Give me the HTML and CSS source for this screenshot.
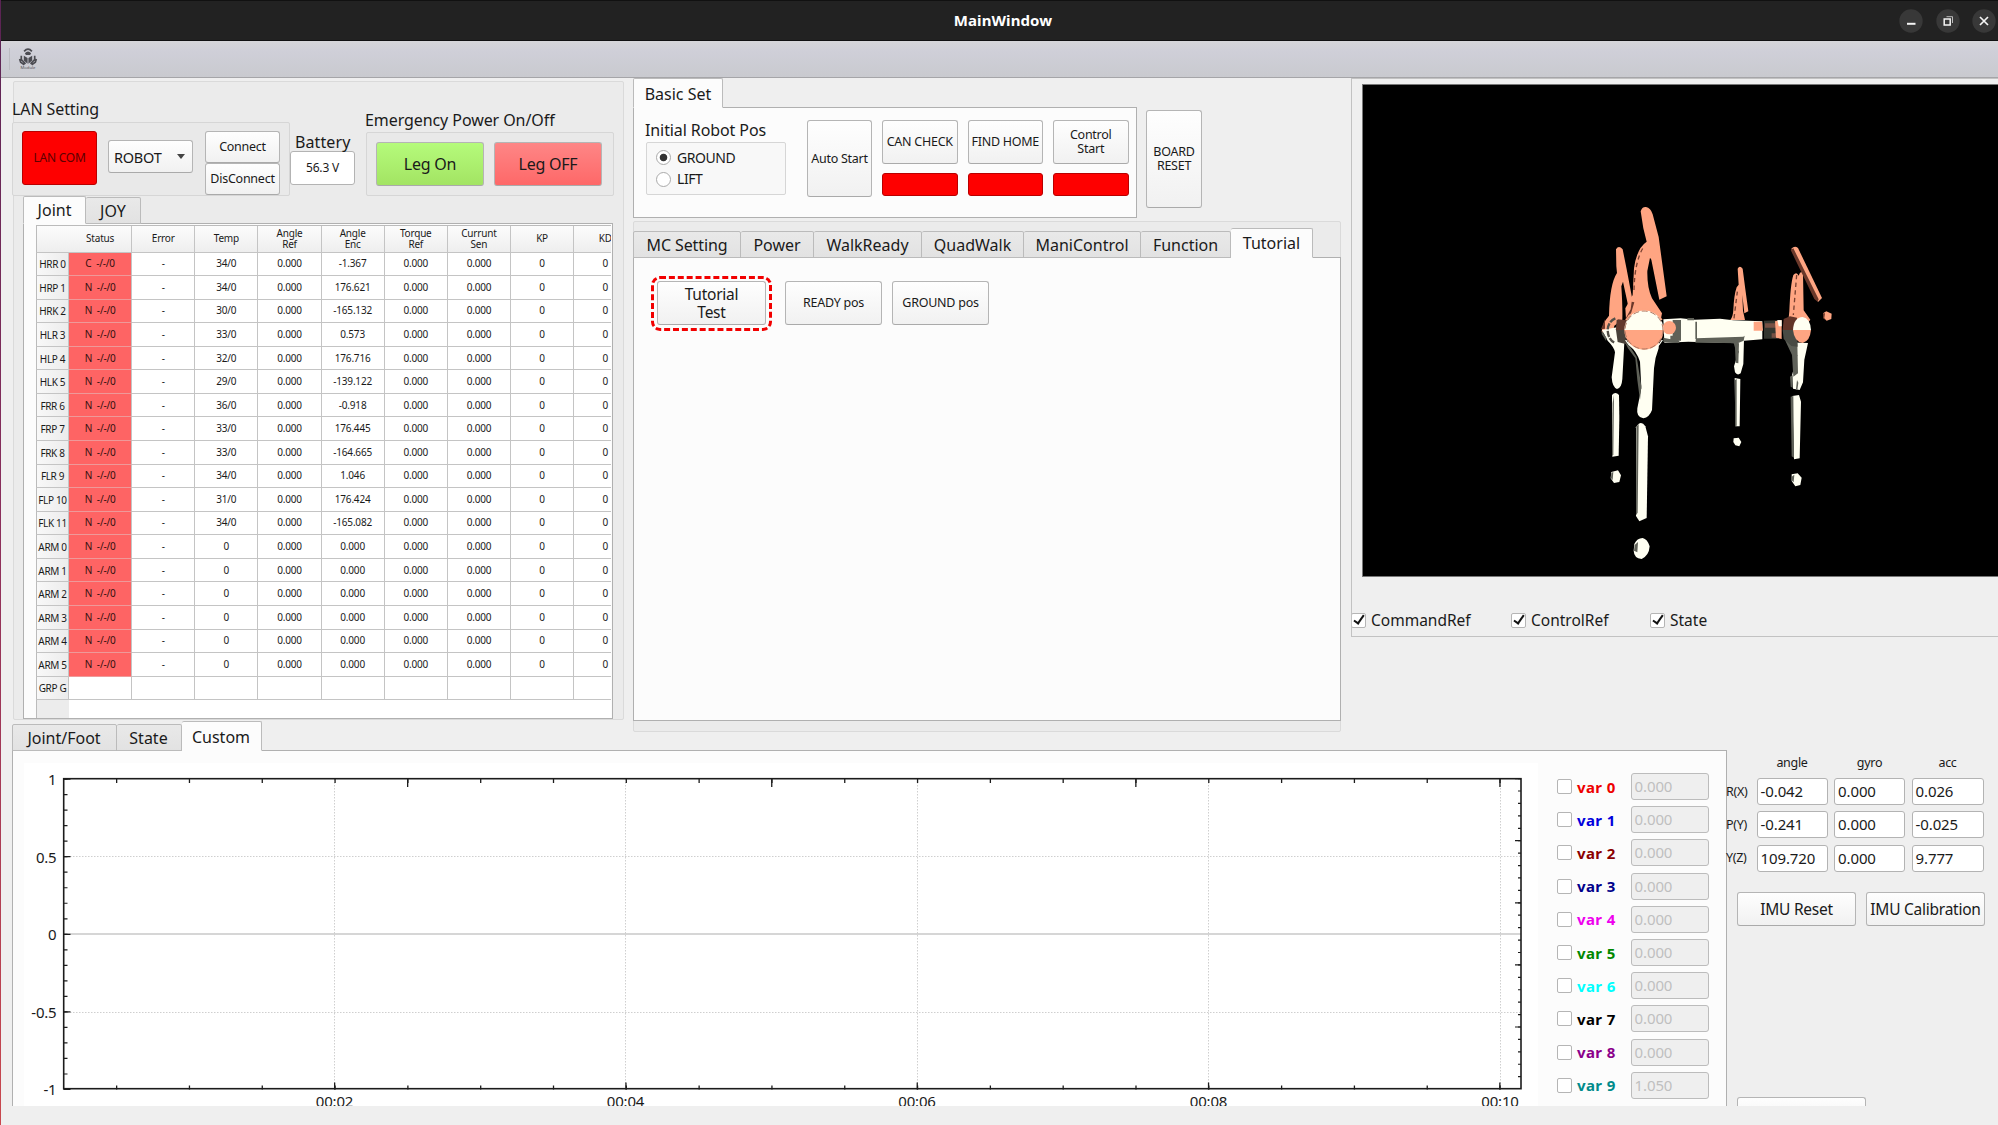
FILE: index.html
```html
<!DOCTYPE html>
<html lang="en">
<head>
<meta charset="utf-8">
<title>MainWindow</title>
<link rel="stylesheet" href="styles.css">
</head>
<body>
<header class="titlebar">
  <h1>MainWindow</h1>
  <div class="winbtns">
    <svg viewBox="0 0 24 24"><circle cx="12" cy="12" r="11.7"/><path d="M8 14.8h8.500" stroke-width="2"/></svg>
    <svg viewBox="0 0 24 24"><circle cx="12" cy="12" r="11.700"/><path d="M8.200 10h6v6h-6z" stroke-width="1.500"/><path d="M10.500 7.700h6v6.300" stroke-width="1" opacity=".7"/></svg>
    <svg viewBox="0 0 24 24"><circle cx="12" cy="12" r="11.700"/><path d="M8 8l8 8M16 8l-8 8" stroke-width="1.700"/></svg>
  </div>
</header>
<div class="toolbar">
  <svg class="logo" viewBox="0 0 18 21"><g fill="none" stroke="#4c4c52" stroke-width="1.600"><path d="M5.300 3.200Q9-1 12.700 3.200"/><path d="M2.600 7.500v3.500l4 4.200M15.400 7.500v3.500l-4 4.200M1 10.500l1 3 3.500 2.500M17 10.500l-1 3-3.500 2.500"/></g><path fill="#4c4c52" d="M6 5q3-3.500 6 0l-1 1.800H7zM5 7.500l3.600 2v5.500L5 12zM13 7.500l-3.600 2v5.500L13 12z"/><text x="9" y="19.800">Module</text></svg>
</div>

<main class="top">
  <section class="left frame">
    <div class="controls">
      <div class="lan">
        <label class="cap">LAN Setting</label>
        <div class="box lanbox">
          <button class="btn red lancom">LAN COM</button>
          <div class="btn combo">ROBOT<i></i></div>
          <div class="conn"><button class="btn">Connect</button><button class="btn">DisConnect</button></div>
        </div>
      </div>
      <div class="battery"><label class="cap">Battery</label><div class="field">56.3 V</div></div>
      <div class="power">
        <label class="cap">Emergency Power On/Off</label>
        <div class="box legs"><button class="btn green">Leg On</button><button class="btn pink">Leg OFF</button></div>
      </div>
    </div>
    <nav class="tabs jtabs"><span class="tab on">Joint</span><span class="tab">JOY</span></nav>
    <div class="pane jpane"><div class="table" id="joints"></div></div>
  </section>

  <section class="mid">
    <div class="basic">
      <div class="basicleft">
        <nav class="tabs btabs"><span class="tab on">Basic Set</span></nav>
        <div class="pane bpane">
          <div class="pos">
            <label class="cap">Initial Robot Pos</label>
            <div class="box radios"><span><i class="radio sel"></i>GROUND</span><span><i class="radio"></i>LIFT</span></div>
          </div>
          <button class="btn auto">Auto Start</button>
          <div class="step"><button class="btn">CAN CHECK</button><i class="btn red"></i></div>
          <div class="step"><button class="btn">FIND HOME</button><i class="btn red"></i></div>
          <div class="step"><button class="btn">Control<br>Start</button><i class="btn red"></i></div>
        </div>
      </div>
      <button class="btn board">BOARD<br>RESET</button>
    </div>
    <div class="frame modes">
      <nav class="tabs mtabs"><span class="tab">MC Setting</span><span class="tab">Power</span><span class="tab">WalkReady</span><span class="tab">QuadWalk</span><span class="tab">ManiControl</span><span class="tab">Function</span><span class="tab on">Tutorial</span></nav>
      <div class="pane mpane">
        <div class="mark"><button class="btn">Tutorial<br>Test</button></div>
        <button class="btn posbtn">READY pos</button>
        <button class="btn posbtn">GROUND pos</button>
      </div>
    </div>
  </section>

  <section class="view">
    <div class="scene">
      <svg class="robot" viewBox="0 0 810 1140">
        <g fill="#ffa582">
          <path d="M108 178q8-14 20 0l12 60 18 95-14 12-15-70-5 14q4 60 3 100l-24 18-6 26-32-6q0-25 22-50 2-95 24-128l-2-20z"/>
          <path d="M182 64q4-14 16-13 14 2 20 22l18 68 24 178-22 10-24-120-4-6-8 40q-1 50 14 82l30 45-10 50H140l-4-65 22-40 4-80q8-60 38-80l-10-40z"/>
          <path d="M473 236q6-12 15 0l8 62 9 66-12 6-6-55 2 47 6 28h-44q8-10 9-30 2-45 10-68l6-8z"/>
          <path d="M640 255q10-12 16 2 6-18 13-6l2 110 20 28-20 25h-48l5-50q3-80 12-109z"/>
          <path d="M634 176q10-10 20-2l72 150-12 12z"/>
          <path d="M729 370l10-6 16 7-1 16-14 5-11-9z"/>
        </g>
        <path d="M632 180l8-5 76 153-3 7-10-8zM729 370l6 0-2 14 7 8-11-9zM63 418l12-30 0 28zM155 335l8 2-12 40-15 24-6-3 22-40z" fill="#6b382a"/>
        <path d="M162 300q2-85 28-128M650 255l-10 120M462 385l10-80" stroke="#7b4131" stroke-width="4" fill="none" stroke-dasharray="13 10"/>
        <g fill="#fffff2">
          <path d="M66 420l17 32q20 20 22 35l-10 75q2 30 16 35 14-2 16-30l6-110 8-37-22-10z"/>
          <path d="M140 440h98l-2 35q-12 30-14 60l-6 125q-8 22-26 25-22-3-18-30l12-60-4-80q-10-30-34-52z"/>
          <path d="M96 615q10-12 21 0l1 70-2 112-19 3z"/>
          <path d="M168 712q14-25 28-3l8 30-4 245-22 10-10-16z"/>
          <path d="M460 450l32-3-2 75-8 28q-10 8-17-3l-3-18 14-44zM464 564l17 3-2 142h-13z"/>
          <path d="M622 457l62 2-11 50-4 68-10 23-20-4-3-40 16-60zM637 618l20-3 6 20-4 170-17 3z"/>
          <path d="M94 846l20-5 9 15-5 20-16 3-10-14zM163 1062q8-18 25-18 14 3 21 25-2 28-24 38-23-2-24-25zM461 745l15-2 8 13-6 13-12-3-6-10zM635 853l18-3 12 13-4 22-15 4-11-16z"/>
          <path d="M250 388l52-3 43 4 75-3 40 5 87 3v54l-55 4-17 8-150-5-72 3z"/>
        </g>
        <g fill="#5f6158">
          <path d="M278 390h25v62h-32v-15h7zM348 445l142-5 4-3-3 15-18 8-85-2h-42zM250 443l48 10v6l-48-3zM322 384h20v7h-20zM346 395h5v52h-5z"/>
          <path d="M66 422l14 23-2 7-13-20zM134 455l17 17 19 29 14 87-4 42-8-60-6-65-22-30zM460 455l17 5-2 60-8-2-2-45zM615 450l37 10 2 90-14 10-4-65zM632 620l8-2 2 185-7-4zM169 710l7-8-3 266-5 8zM98 640l4-25-2 180-4 2zM465 570l5-3v140l-5 2zM630 560l8-5v38l-6-3zM651 570l4 8-3 22-4-4zM94 850l6-5-2 25-5-5zM164 1065l10-9-2 31-10-5zM635 860l8-6-2 23-6-6z"/>
        </g>
        <path d="M110 390l35 2-10 50 10 22-32-8-5-35z" fill="#484139"/>
        <path d="M113 388l27 3-6 29h-27z" fill="#63382d"/>
        <path d="M552 392l43-1v55h-43z" fill="#343630"/>
        <path d="M555 400h40v13h-40zM575 430h22v13h-22z" fill="#765044"/>
        <path d="M585 394l20-4v57l-17-4z" fill="#ffa582"/><path d="M592 390l13 1v18h-9z" fill="#fffff2"/>
        <path d="M611 387l19-8 21 4v37h-43z" fill="#623428"/><path d="M608 420h43l2 50-19-2-23-21z" fill="#494b44"/>
        <path d="M106 385q-22 10-23 35 1 28 20 38" fill="none" stroke="#54514a" stroke-width="7" stroke-dasharray="19 4"/>
        <path d="M521 395h25l3 27h-28z" fill="#ffa582"/>
        <circle cx="268" cy="413" r="20" fill="#ffa582"/>
        <path d="M133 420a59 59 0 0 1 118 0z" fill="#fffff2"/><path d="M133 420a59 59 0 0 0 118 0z" fill="#ffa582"/>
        <circle cx="192" cy="420" r="57" fill="none" stroke="#ad755e" stroke-width="3" stroke-dasharray="18 8"/>
        <path d="M138 390a62 62 0 0 1 108 0" fill="none" stroke="#ffa582" stroke-width="4"/>
        <path d="M137 450a62 62 0 0 0 110 0" fill="none" stroke="#fffff2" stroke-width="4"/>
        <path d="M639 420q2-38 29-39 23 4 25 39z" fill="#fffff2"/><path d="M639 420q4 36 29 39 22-6 25-39z" fill="#ffa582"/>
      </svg>
    </div>
    <div class="checks"><span><i class="chk on"></i>CommandRef</span><span><i class="chk on"></i>ControlRef</span><span><i class="chk on"></i>State</span></div>
  </section>
</main>

<section class="bottom">
  <div class="plotside">
    <nav class="tabs ptabs"><span class="tab">Joint/Foot</span><span class="tab">State</span><span class="tab on">Custom</span></nav>
    <div class="pane ppane">
      <svg class="plot" viewBox="14 763 1524 343">
        <rect x="24" y="763" width="1514" height="343" fill="#fff"/>
        <g fill="none" stroke="#cfcfcf" stroke-dasharray="1.500 1.500"><path d="M334.500 779V1089M625.500 779V1089M917.500 779V1089M1208.500 779V1089M1500.500 779V1089M64 856.500H1521M64 1012.500H1521"/></g>
        <path d="M64 934H1521" stroke="#c8c8c8" stroke-width="1.500"/>
        <g stroke="#1c1c1c" fill="none">
          <path d="M116 781H1521M116 1087.500H1521" stroke-width="4" stroke-dasharray="1.300 71.510"/>
          <path d="M407 783H1521" stroke-width="8" stroke-dasharray="1.300 362.800"/>
          <path d="M334 1086H1521" stroke-width="7" stroke-dasharray="1.300 290"/>
          <path d="M65.500 778.500V1089" stroke-width="4" stroke-dasharray="1.200 14.320"/>
          <path d="M67 778.500V1090" stroke-width="7" stroke-dasharray="1.200 76.400"/>
          <path d="M1519.500 778V1089" stroke-width="3" stroke-dasharray="1.200 11.220"/>
          <path d="M1518 778V1089" stroke-width="6" stroke-dasharray="1.200 60.900"/>
          <rect x="63.700" y="778.700" width="1457.300" height="310" stroke-width="1.600"/>
        </g>
        <g class="ylab"><text x="56.500" y="784.500">1</text><text x="56.500" y="862.500">0.5</text><text x="56.500" y="939.500">0</text><text x="56.500" y="1017.500">-0.5</text><text x="56.500" y="1094.500">-1</text></g>
        <g class="xlab"><text x="334.500" y="1106.500">00:02</text><text x="625.500" y="1106.500">00:04</text><text x="917" y="1106.500">00:06</text><text x="1208.500" y="1106.500">00:08</text><text x="1500" y="1106.500">00:10</text></g>
      </svg>
      <div class="vars" id="vars"></div>
    </div>
  </div>
  <div class="imu">
    <div class="grid">
      <span></span><b>angle</b><b>gyro</b><b>acc</b>
      <span>R(X)</span><div class="field">-0.042</div><div class="field">0.000</div><div class="field">0.026</div>
      <span>P(Y)</span><div class="field">-0.241</div><div class="field">0.000</div><div class="field">-0.025</div>
      <span>Y(Z)</span><div class="field">109.720</div><div class="field">0.000</div><div class="field">9.777</div>
    </div>
    <div class="imubtns"><button class="btn">IMU Reset</button><button class="btn">IMU Calibration</button></div>
    <div class="btn partial"></div>
  </div>
</section>
<script src="app.js"></script>
</body>
</html>
```
FILE: styles.css
```css
* { box-sizing: border-box; }
body { margin: 0; width: 1998px; height: 1125px; overflow: hidden; background: #efefef; color: #1a1a1a; font: 16px/20px "Noto Sans", "Open Sans", sans-serif; border-left: 1px solid; border-image: linear-gradient(#5a2454, #8a2f5c 45%, #c9484e) 1; display: flex; flex-direction: column; }
button { font: inherit; color: inherit; padding: 0; }
i { font-style: normal; }
.titlebar { height: 41px; flex: none; margin-left: -1px; background: #222; border-top: 1px solid #111; border-bottom: 1px solid #111; display: grid; grid-template-columns: 1fr auto 1fr; align-items: center; }
.titlebar h1 { grid-column: 2; margin: -1px 0 0 8px; font-size: 15px; font-weight: 700; color: #fff; letter-spacing: .1px; }
.winbtns { display: flex; gap: 12.500px; justify-self: end; margin-right: 2px; }
.winbtns svg { width: 24px; height: 24px; fill: none; stroke: #f4f4f4; }
.winbtns circle { fill: #383838; stroke: none; }
.toolbar { height: 37px; flex: none; background: linear-gradient(#d6d6d9, #cfcfd8 30%, #c9cacf); border-bottom: 1.500px solid #a5a5a8; padding: 7px 0 0 8px; }
.logo { display: block; width: 37px; height: 22px; border-left: 1px solid #bcbcc2; }
.logo text { font-size: 4px; text-anchor: middle; fill: #555; }
.top { height: 643px; flex: none; display: flex; align-items: flex-start; padding-left: 12px; }
.frame { border: 1px solid #dadada; border-radius: 2px; background: #ebebeb; }
.box { border: 1px solid #d6d6d6; border-radius: 2px; background: #e9e9e9; }
.cap { display: block; font-size: 16px; white-space: nowrap; }
.btn { display: flex; align-items: center; justify-content: center; text-align: center; border: 1px solid #b5b5b5; border-bottom-color: #aaa; border-radius: 3px; background: linear-gradient(#fefefe, #f1f1f1); font-size: 12.500px; line-height: 14px; letter-spacing: -.25px; white-space: nowrap; }
.red { background: #fe0000; border-color: #b90000; }
.field { background: #fff; border: 1px solid #b3b3b3; border-radius: 3px; }
.pane { border: 1px solid #b0b0b0; background: #fcfcfc; }
.tabs { display: flex; align-items: flex-end; position: relative; margin-bottom: -1px; z-index: 1; }
.tab { display: flex; align-items: center; justify-content: center; height: 27px; border: 1px solid #bbb; border-left: 0; background: linear-gradient(#e9e9e9, #e2e2e2); border-radius: 2px 2px 0 0; white-space: nowrap; }
.tab:first-child { border-left: 1px solid #bbb; }
.tab.on { height: 30px; background: #fcfcfc; border-bottom-color: #fcfcfc; }

/* left column */
.left { width: 611px; height: 639px; margin-top: 3px; flex: none; }
.controls { display: flex; height: 114px; align-items: flex-end; margin-left: -2px; }
.lan { width: 278px; }
.lan .cap { margin-bottom: 3px; letter-spacing: -.1px; }
.lanbox { height: 74px; display: flex; padding: 8px 0 0 9px; }
.lancom { width: 75px; height: 54px; font-size: 12px; color: #5c0000; }
.combo { width: 85px; height: 33px; margin: 9px 12px 0 11px; font-size: 14.500px; justify-content: space-between; padding: 0 7px 0 5px; }
.combo i { border: 4.500px solid transparent; border-top: 5px solid #444; border-bottom: 0; }
.conn .btn { width: 75px; height: 32px; }
.battery { width: 65px; padding-bottom: 11px; }
.battery .cap { margin: 0 0 -1px 5px; letter-spacing: .1px; }
.battery .field { height: 34px; font-size: 12px; letter-spacing: -.2px; display: grid; place-items: center; }
.power { margin-left: 10px; width: 249px; }
.power .cap { margin-bottom: 2px; letter-spacing: -.08px; }
.legs { margin-left: 1px; height: 64px; padding: 9px 9px; display: flex; gap: 10px; }
.legs .btn { width: 108px; height: 44px; font-size: 16px; }
.green { background: linear-gradient(#b5fb7b, #a3e463); }
.pink { background: linear-gradient(#fe8686, #fe6868); }
.jtabs { margin-left: 9px; }
.jtabs .tab { width: 55px; }
.jtabs .tab.on { width: 63px; height: 28px; }
.jpane { margin-left: 9px; width: 590px; height: 496px; padding: 1px 0 0 12px; overflow: hidden; }
.table { width: 575px; height: 100%; overflow: hidden; display: flex; flex-direction: column; background: #fff; font-size: 10px; letter-spacing: -.2px; }
.tr { display: grid; grid-template-columns: 33px repeat(9, 63.150px); grid-template-rows: 100%; height: 23.570px; flex: none; }
.tr > * { border-right: 1px solid #c4c4c4; border-bottom: 1px solid #c4c4c4; display: flex; align-items: center; justify-content: center; line-height: 11px; text-align: center; white-space: nowrap; }
.tr .rh { background: linear-gradient(90deg, #f8f8f8, #ececec); border-left: 1px solid #bbb; letter-spacing: -.35px; padding-top: 2px; }
.tr .st { background: #fe6464; border-bottom-color: #e99; color: #33100f; white-space: pre; }
.tr.head { height: 27.500px; border-top: 1px solid #bbb; }
.tr.head > * { background: linear-gradient(#fcfcfc, #eee); }
.tr.head .rh { border-right: 0; }
.tr.rest { flex: 1; } .tr.rest > * { border: 0; } .tr.rest .rh { background: #ececec; border-left: 1px solid #bbb; }

/* middle column */
.mid { width: 708px; margin-left: 9px; flex: none; }
.basic { display: flex; height: 143px; }
.basicleft { width: 504px; }
.btabs .tab { width: 90px; padding-top: 2px; }
.bpane { height: 111px; display: flex; padding: 12px 0 0 12px; }
.pos { width: 161px; margin-top: -1px; }
.pos .cap { margin: 1px 0 2px -1px; letter-spacing: -.1px; }
.radios { width: 140px; height: 53px; background: #f8f8f8; padding: 4px 9px; font-size: 14px; letter-spacing: -.45px; }
.radios span { display: flex; align-items: center; height: 21.500px; }
.radio { width: 15px; height: 15px; border: 1px solid #aaa; border-radius: 50%; background: #fff; margin-right: 6px; }
.sel { background: radial-gradient(circle, #333 3.400px, #fff 4.200px); }
.auto { width: 65px; height: 77px; }
.step { margin-left: 10px; width: 75.500px; display: flex; flex-direction: column; gap: 9px; }
.step button { height: 44px; }
.step i { height: 23px; }
.board { width: 56px; height: 98px; margin: 32px 0 0 9px; }
.modes { width: 708px; height: 511px; }
.mtabs { margin: 5px 0 -1px -1px; height: 31px; }
.mtabs .tab:nth-child(1) { width: 108px; letter-spacing: -.1px; } .mtabs .tab:nth-child(2) { width: 73px; } .mtabs .tab:nth-child(3) { width: 108px; } .mtabs .tab:nth-child(4) { width: 102px; } .mtabs .tab:nth-child(5) { width: 117px; } .mtabs .tab:nth-child(6) { width: 90px; } .mtabs .tab:nth-child(7) { width: 82px; }
.mpane { margin: 0 -1px; height: 464px; padding: 18px 0 0 17px; display: flex; align-items: flex-start; }
.mark { border: 3px dashed #f20000; border-radius: 9px; width: 121px; height: 55px; padding: 2px 3px; margin-right: 13px; }
.mark .btn { width: 109px; height: 44px; font-size: 15.500px; line-height: 18px; }
.posbtn { width: 97px; height: 44px; margin: 5px 10px 0 0; }

/* 3D view */
.view { flex: 1; margin-left: 10px; height: 559px; border: 1px solid #c2c2c2; border-right: 0; overflow: hidden; }
.scene { margin: 5px 0 0 10px; height: 493px; background: #000; border: 1px solid #777; border-right: 0; padding: 105px 0 0 217px; }
.robot { width: 270px; height: 380px; display: block; }
.checks { display: grid; grid-template-columns: 160px 139px auto; margin: 33px 0 0 -1px; font-size: 15.500px; }
.checks span { display: flex; align-items: center; }
.chk { width: 15px; height: 15px; flex: none; border: 1px solid #b5b5b5; border-radius: 2px; background: #fff; margin-right: 5px; display: grid; place-items: center; }
.chk.on::after { content: ""; width: 4px; height: 9px; margin: -3px 0 0 1px; border: solid #111; border-width: 0 2px 2px 0; transform: rotate(35deg); }

/* plot and variables */
.bottom { height: 385px; flex: none; display: flex; overflow: hidden; padding-left: 11px; }
.plotside { width: 1715px; flex: none; }
.ptabs .tab { width: 65px; padding-right: 1px; } .ptabs .tab:first-child { width: 105px; } .ptabs .tab.on { width: 80px; padding-top: 1px; }
.ppane { height: 370px; display: flex; padding: 12px 0 0 1px; }
.plot { width: 1524px; height: 343px; flex: none; }
.plot text { font-size: 15px; fill: #1a1a1a; letter-spacing: -.2px; }
.ylab { text-anchor: end; } .xlab { text-anchor: middle; }
.vars { margin: -4px 0 0 18.500px; padding-top: 11px; }
.var { display: flex; align-items: center; height: 33.200px; font-size: 15px; }
.var .chk { margin-right: 5.500px; }
.var b { width: 53.500px; letter-spacing: .4px; }
.var .field { width: 78px; height: 27px; background: #efefef; color: #bfbfbf; padding: 2px 3px; letter-spacing: -.1px; border-color: #bcbcbc; }
.imu { width: 272px; flex: none; }
.grid { display: grid; grid-template-columns: 24px 71px 71px 72px; grid-template-rows: 24px 27px 27px 27px; gap: 6.200px 6.500px; width: 258px; margin: 29px 0 0 -1px; font-size: 15px; align-items: center; }
.grid span, .grid b { font-size: 12.500px; font-weight: 400; letter-spacing: -.3px; }
.grid b { text-align: center; margin-top: 1px; }
.grid .field { height: 27px; padding: 2px 3px; letter-spacing: -.1px; margin-top: -4px; }
.grid span { margin-top: -4px; }
.imubtns { display: flex; gap: 10px; margin: 18px 0 0 10px; }
.imubtns .btn { width: 119px; height: 34px; font-size: 15.500px; }
.partial { width: 129px; height: 30px; margin: 171px 0 0 10px; }
```
FILE: app.js
```js
// joint rows: name, status letter, temperature, encoder angle
const joints = [
  ["HRR 0", "C", "34/0", "-1.367"], ["HRP 1", "N", "34/0", "176.621"], ["HRK 2", "N", "30/0", "-165.132"],
  ["HLR 3", "N", "33/0", "0.573"], ["HLP 4", "N", "32/0", "176.716"], ["HLK 5", "N", "29/0", "-139.122"],
  ["FRR 6", "N", "36/0", "-0.918"], ["FRP 7", "N", "33/0", "176.445"], ["FRK 8", "N", "33/0", "-164.665"],
  ["FLR 9", "N", "34/0", "1.046"], ["FLP 10", "N", "31/0", "176.424"], ["FLK 11", "N", "34/0", "-165.082"],
  ["ARM 0", "N", "0", "0.000"], ["ARM 1", "N", "0", "0.000"], ["ARM 2", "N", "0", "0.000"],
  ["ARM 3", "N", "0", "0.000"], ["ARM 4", "N", "0", "0.000"], ["ARM 5", "N", "0", "0.000"]
];
const row = (cls, cells) => `<div class="tr ${cls}">${cells.map((c, i) => `<div class="${i === 0 ? "rh" : i === 1 && cls === "data" ? "st" : ""}">${c}</div>`).join("")}</div>`;
let html = row("head", ["", "Status", "Error", "Temp", "Angle<br>Ref", "Angle<br>Enc", "Torque<br>Ref", "Currunt<br>Sen", "KP", "KD"]);
for (const [n, s, t, a] of joints) html += row("data", [n, s + "  -/-/0", "-", t, "0.000", a, "0.000", "0.000", "0", "0"]);
html += row("", ["GRP G", "", "", "", "", "", "", "", "", ""]);
html += row("rest", [""]);
document.getElementById("joints").innerHTML = html;

const colors = ["#ee0000", "#0000dd", "#8b0000", "#00008b", "#ee00ee", "#008800", "#00ffff", "#000000", "#8b008b", "#008b8b"];
document.getElementById("vars").innerHTML = colors.map((c, i) =>
  `<div class="var"><i class="chk"></i><b style="color:${c}">var ${i}</b><div class="field">${i === 9 ? "1.050" : "0.000"}</div></div>`).join("");
```
